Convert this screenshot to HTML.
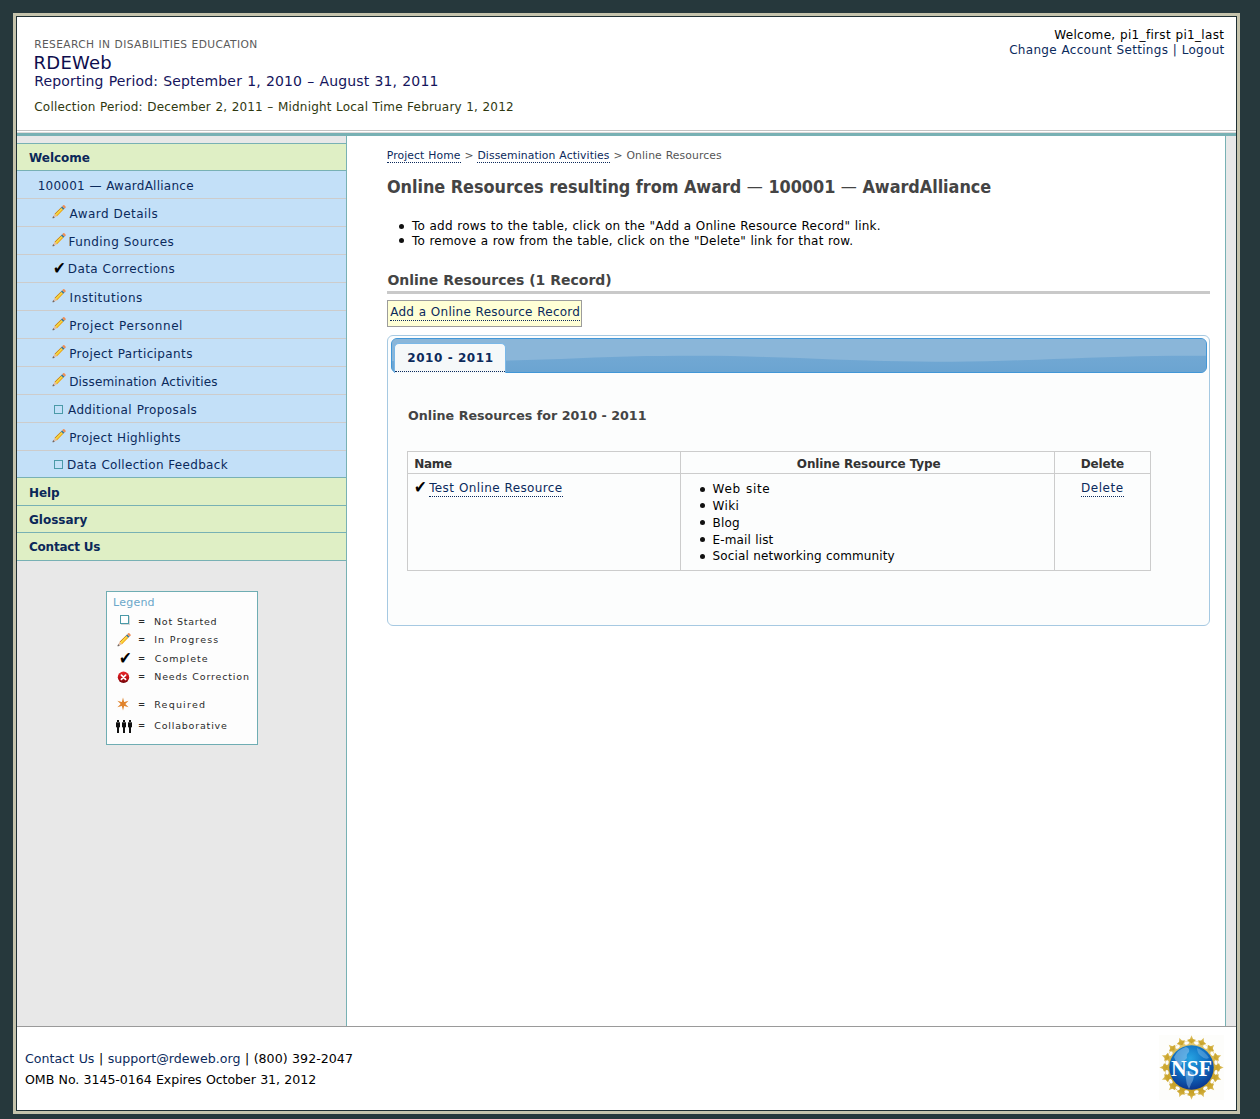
<!DOCTYPE html>
<html lang="en">
<head>
<meta charset="utf-8">
<title>RDEWeb - Online Resources</title>
<style>
html,body{margin:0;padding:0;background:#26383c;}
body{width:1260px;height:1119px;background:#26383c;font-family:"DejaVu Sans","Liberation Sans",sans-serif;font-size:12px;color:#000;position:relative;overflow:hidden;}
a{color:#0b2a5c;text-decoration:none;}
h1,h2,h3,ul,ol,li,p{margin:0;padding:0;list-style:none;font-weight:normal;}
#frame{position:absolute;left:13px;top:13px;width:1221px;height:1095px;border:3px solid #c5c3ac;background:#1f3035;}
#page{position:absolute;left:17px;top:17px;width:1219px;height:1093px;background:#fff;overflow:hidden;}
.t{position:absolute;white-space:nowrap;line-height:1;margin:0;}
.bx{position:absolute;}
.ic{position:absolute;display:block;overflow:visible;}
.lk{border-bottom:1px dotted #0b2a5c;}
a.t.lk{padding-bottom:2px;}
.sq{position:absolute;width:7px;height:7px;border:1px solid #4b9aa8;}
.sqs{background:#fff;box-shadow:1px 1px 0 #d8d8d8;}
.ckn{font-size:14px;color:#000;transform-origin:0 100%;transform:scale(1.08,1.24);}
.bul{position:absolute;width:5px;height:5px;border-radius:50%;background:#111;}
.dash{font-weight:normal;position:relative;top:-1.5px;}
#legend{position:absolute;left:89px;top:574px;width:152px;height:154px;box-sizing:border-box;border:1px solid #6fadb3;background:#fdfdfd;}
#h2line{position:absolute;left:370px;top:274px;width:823px;height:3px;background:#c9c9c9;}
#addbtn{position:absolute;left:370px;top:283px;width:195px;height:27px;box-sizing:border-box;border:1px solid #9c9c9c;background:#ffffd5;}
#tabs{position:absolute;left:370px;top:318px;width:823px;height:291px;box-sizing:border-box;border:1px solid #a6c9e2;border-radius:6px;background:#fcfdfd;}
#thead{position:absolute;left:374px;top:321px;width:816px;height:35px;box-sizing:border-box;border:1px solid #4297d7;border-radius:6px;background:#6fa6d2;overflow:hidden;}
#thead svg{position:absolute;left:0;top:0;}
#tabbg{position:absolute;left:377px;top:326px;width:112px;height:30px;box-sizing:border-box;border:1px solid #79b7e7;border-bottom:0;border-radius:5px 5px 0 0;background:#f5f8f9;}
#tabdot{position:absolute;left:378px;top:354px;width:110px;height:1px;height:0;border-top:1px dotted #0b2a5c;}
#tbl{position:absolute;left:390px;top:434px;width:744px;height:120px;box-sizing:border-box;border:1px solid #ccc;}
#nsf{position:absolute;left:1142px;top:1018px;}
#hd1{left:17.20px;top:23.00px;font-size:10.67px;word-spacing:0.36px;letter-spacing:0.379px;color:#5a5a5a;}
#hd2{left:16.60px;top:37.00px;font-size:18px;letter-spacing:0.240px;color:#0d0d4d;}
#hd3{left:17.20px;top:57.00px;font-size:14px;word-spacing:0.48px;letter-spacing:0.155px;color:#15155c;}
#hd4{left:17.30px;top:84.00px;font-size:12px;word-spacing:0.41px;letter-spacing:0.192px;color:#2f380f;}
#hr1{left:1037.20px;top:12.00px;font-size:12px;word-spacing:0.41px;letter-spacing:0.322px;color:#000;}
#hr2{left:992.20px;top:27.00px;font-size:12px;word-spacing:0.41px;letter-spacing:0.305px;color:#0b2a5c;}
#nv0{left:12.00px;top:135.00px;font-size:12px;font-weight:700;letter-spacing:-0.032px;color:#0b2859;}
#nv1{left:20.63px;top:163.00px;font-size:12px;word-spacing:0.41px;letter-spacing:0.251px;color:#0b2a5c;}
#nv2{left:52.60px;top:191.00px;font-size:12px;word-spacing:0.41px;letter-spacing:0.424px;color:#0b2a5c;}
#nv3{left:51.60px;top:219.00px;font-size:12px;word-spacing:0.41px;letter-spacing:0.423px;color:#0b2a5c;}
#nv4{left:50.80px;top:246.00px;font-size:12px;word-spacing:0.41px;letter-spacing:0.388px;color:#0b2a5c;}
#nv5{left:52.60px;top:275.00px;font-size:12px;letter-spacing:0.516px;color:#0b2a5c;}
#nv6{left:52.20px;top:303.00px;font-size:12px;word-spacing:0.41px;letter-spacing:0.582px;color:#0b2a5c;}
#nv7{left:52.20px;top:331.00px;font-size:12px;word-spacing:0.41px;letter-spacing:0.395px;color:#0b2a5c;}
#nv8{left:52.20px;top:359.00px;font-size:12px;word-spacing:0.41px;letter-spacing:0.169px;color:#0b2a5c;}
#nv9{left:51.00px;top:387.00px;font-size:12px;word-spacing:0.41px;letter-spacing:0.379px;color:#0b2a5c;}
#nv10{left:52.20px;top:415.00px;font-size:12px;word-spacing:0.41px;letter-spacing:0.324px;color:#0b2a5c;}
#nv11{left:50.00px;top:442.00px;font-size:12px;word-spacing:0.41px;letter-spacing:0.304px;color:#0b2a5c;}
#ng1{left:11.98px;top:470.00px;font-size:12px;font-weight:700;letter-spacing:-0.067px;color:#0b2859;}
#ng2{left:12.00px;top:497.00px;font-size:12px;font-weight:700;color:#0b2859;}
#ng3{left:12.00px;top:524.00px;font-size:12px;font-weight:700;letter-spacing:-0.213px;color:#0b2859;}
#lg0{left:96.00px;top:580.00px;font-size:11px;letter-spacing:0.240px;color:#6ba7c9;}
#le0{left:121.20px;top:600.00px;font-size:10px;color:#2a2a2a;transform-origin:0 0;transform:scaleX(0.86);}
#ll0{left:137.00px;top:600.00px;font-size:9.5px;word-spacing:0.32px;letter-spacing:0.750px;color:#2a2a2a;}
#le1{left:121.20px;top:618.00px;font-size:10px;color:#2a2a2a;transform-origin:0 0;transform:scaleX(0.86);}
#ll1{left:137.16px;top:618.00px;font-size:9.5px;word-spacing:0.32px;letter-spacing:1.130px;color:#2a2a2a;}
#le2{left:121.20px;top:637.00px;font-size:10px;color:#2a2a2a;transform-origin:0 0;transform:scaleX(0.86);}
#ll2{left:137.80px;top:637.00px;font-size:9.5px;letter-spacing:1.000px;color:#2a2a2a;}
#le3{left:121.20px;top:655.00px;font-size:10px;color:#2a2a2a;transform-origin:0 0;transform:scaleX(0.86);}
#ll3{left:137.20px;top:655.00px;font-size:9.5px;word-spacing:0.32px;letter-spacing:0.835px;color:#2a2a2a;}
#le4{left:121.20px;top:683.00px;font-size:10px;color:#2a2a2a;transform-origin:0 0;transform:scaleX(0.86);}
#ll4{left:137.20px;top:683.00px;font-size:9.5px;letter-spacing:1.215px;color:#2a2a2a;}
#le5{left:121.20px;top:704.00px;font-size:10px;color:#2a2a2a;transform-origin:0 0;transform:scaleX(0.86);}
#ll5{left:137.20px;top:704.00px;font-size:9.5px;letter-spacing:0.810px;color:#2a2a2a;}
#bc{left:369.80px;top:134.00px;font-size:10.8px;word-spacing:0.37px;letter-spacing:0.090px;color:#555;}
#h1{left:369.80px;top:162.00px;font-size:17px;font-weight:700;letter-spacing:-0.040px;color:#444;transform-origin:0 0;transform:scaleX(0.945);}
#li1{left:395.00px;top:203.00px;font-size:12px;word-spacing:0.41px;letter-spacing:0.228px;color:#000;}
#li2{left:395.00px;top:218.00px;font-size:12px;word-spacing:0.41px;letter-spacing:0.200px;color:#000;}
#h2{left:370.40px;top:256.00px;font-size:14px;font-weight:700;letter-spacing:-0.005px;color:#444;}
#add{left:373.20px;top:289.00px;font-size:12px;word-spacing:0.41px;letter-spacing:0.263px;color:#0b2a5c;}
#tab{left:390.23px;top:335.00px;font-size:12px;font-weight:700;letter-spacing:0.570px;color:#0b2a5c;}
#ph{left:390.60px;top:392.00px;font-size:13px;font-weight:700;letter-spacing:0.016px;color:#444;transform-origin:0 0;transform:scaleX(0.975);}
#th1{left:397.16px;top:441.00px;font-size:12px;font-weight:700;letter-spacing:-0.266px;color:#333;}
#th2{left:779.80px;top:441.00px;font-size:12px;font-weight:700;letter-spacing:-0.100px;color:#333;}
#th3{left:1063.80px;top:441.00px;font-size:12px;font-weight:700;letter-spacing:-0.180px;color:#333;}
#td1{left:412.20px;top:465.00px;font-size:12px;word-spacing:0.41px;letter-spacing:0.380px;color:#0b2a5c;}
#ul0{left:695.60px;top:466.00px;font-size:12px;word-spacing:0.41px;letter-spacing:0.729px;color:#000;}
#ul1{left:695.60px;top:483.00px;font-size:12px;letter-spacing:0.333px;color:#000;}
#ul2{left:695.60px;top:500.00px;font-size:12px;letter-spacing:0.201px;color:#000;}
#ul3{left:695.60px;top:517.00px;font-size:12px;word-spacing:0.41px;letter-spacing:0.120px;color:#000;}
#ul4{left:695.60px;top:533.00px;font-size:12px;word-spacing:0.41px;letter-spacing:0.115px;color:#000;}
#td3{left:1064.00px;top:465.00px;font-size:12px;letter-spacing:0.520px;color:#0b2a5c;}
#ft1{left:8.00px;top:1036.00px;font-size:12.6px;word-spacing:0.43px;letter-spacing:0.025px;color:#000;}
#ft2{left:8.00px;top:1057.00px;font-size:12.6px;word-spacing:0.43px;letter-spacing:-0.073px;color:#000;}
</style>
</head>
<body>
<svg width="0" height="0" style="position:absolute"><defs>
<g id="pencil"><g transform="translate(1.8,15) rotate(-45)"><polygon points="-0.4,0 0.4,-0.75 2,-1 2,1 0.4,0.75" fill="#74665f"/><polygon points="2,-1 4.3,-1.7 4.3,1.7 2,1" fill="#e8bb9d"/><rect x="4.3" y="-1.7" width="8.9" height="1.2" fill="#d6860a"/><rect x="4.3" y="-0.5" width="8.9" height="1.1" fill="#ffe327"/><rect x="4.3" y="0.6" width="8.9" height="1.1" fill="#f2a30a"/><rect x="13.2" y="-1.7" width="1.8" height="3.4" fill="#3f7891"/><path d="M15,-1.7 h1.3 a0.9,0.9 0 0 1 0.9,0.9 v1.6 a0.9,0.9 0 0 1 -0.9,0.9 h-1.3 z" fill="#f08d55"/></g></g>
</defs></svg>
<div id="frame"></div>
<div id="page">
  <div id="header">
    <div class="t" id="hd1">RESEARCH IN DISABILITIES EDUCATION</div>
    <div class="t" id="hd2">RDEWeb</div>
    <div class="t" id="hd3">Reporting Period: September 1, 2010 – August 31, 2011</div>
    <div class="t" id="hd4">Collection Period: December 2, 2011 – Midnight Local Time February 1, 2012</div>
    <div class="t" id="hr1">Welcome, pi1_first pi1_last</div>
    <div class="t" id="hr2"><a>Change Account Settings</a> | <a>Logout</a></div>
    <div class="bx" style="left:0px;top:113px;width:1219px;height:1px;background:#c3c3c3"></div>
    <div class="bx" style="left:0px;top:115px;width:1219px;height:1px;background:#dfdbdb"></div>
    <div class="bx" style="left:0px;top:116px;width:1219px;height:3px;background:#78b1b4"></div>
  </div>
  <div id="sidebar">
    <div class="bx" style="left:0px;top:119px;width:329px;height:890px;background:#e8e8e8"></div>
    <div class="bx" style="left:329px;top:119px;width:1px;height:890px;background:#78b1b4"></div>
    <div class="bx" style="left:0px;top:126px;width:329px;height:1px;background:#78b1b4"></div>
    <div class="bx" style="left:0px;top:127px;width:329px;height:26px;background:#dfefc5"></div>
    <div class="bx" style="left:0px;top:153px;width:329px;height:1px;background:#78b1b4"></div>
    <div class="bx" style="left:0px;top:154px;width:329px;height:306px;background:#c3e0f8"></div>
    <div class="bx" style="left:0px;top:181px;width:329px;height:1px;background:#cdcccb"></div>
    <div class="bx" style="left:0px;top:209px;width:329px;height:1px;background:#cdcccb"></div>
    <div class="bx" style="left:0px;top:237px;width:329px;height:1px;background:#cdcccb"></div>
    <div class="bx" style="left:0px;top:265px;width:329px;height:1px;background:#cdcccb"></div>
    <div class="bx" style="left:0px;top:293px;width:329px;height:1px;background:#cdcccb"></div>
    <div class="bx" style="left:0px;top:321px;width:329px;height:1px;background:#cdcccb"></div>
    <div class="bx" style="left:0px;top:349px;width:329px;height:1px;background:#cdcccb"></div>
    <div class="bx" style="left:0px;top:377px;width:329px;height:1px;background:#cdcccb"></div>
    <div class="bx" style="left:0px;top:405px;width:329px;height:1px;background:#cdcccb"></div>
    <div class="bx" style="left:0px;top:433px;width:329px;height:1px;background:#cdcccb"></div>
    <div class="bx" style="left:0px;top:460px;width:329px;height:1px;background:#78b1b4"></div>
    <div class="bx" style="left:0px;top:461px;width:329px;height:27px;background:#dfefc5"></div>
    <div class="bx" style="left:0px;top:488px;width:329px;height:1px;background:#78b1b4"></div>
    <div class="bx" style="left:0px;top:489px;width:329px;height:26px;background:#dfefc5"></div>
    <div class="bx" style="left:0px;top:515px;width:329px;height:1px;background:#78b1b4"></div>
    <div class="bx" style="left:0px;top:516px;width:329px;height:27px;background:#dfefc5"></div>
    <div class="bx" style="left:0px;top:543px;width:329px;height:1px;background:#78b1b4"></div>
    <b class="t" id="nv0">Welcome</b>
    <a class="t" id="nv1">100001 — AwardAlliance</a>
    <ul id="nav">
      <li><svg class="ic" style="left:34.0px;top:186.0px" width="16" height="16" viewBox="0 0 16 16"><use href="#pencil"/></svg><a class="t" id="nv2">Award Details</a></li>
      <li><svg class="ic" style="left:34.0px;top:214.0px" width="16" height="16" viewBox="0 0 16 16"><use href="#pencil"/></svg><a class="t" id="nv3">Funding Sources</a></li>
      <li><span class="t ckn" style="left:36.2px;top:245px">✔</span><a class="t" id="nv4">Data Corrections</a></li>
      <li><svg class="ic" style="left:34.0px;top:270.0px" width="16" height="16" viewBox="0 0 16 16"><use href="#pencil"/></svg><a class="t" id="nv5">Institutions</a></li>
      <li><svg class="ic" style="left:34.0px;top:298.0px" width="16" height="16" viewBox="0 0 16 16"><use href="#pencil"/></svg><a class="t" id="nv6">Project Personnel</a></li>
      <li><svg class="ic" style="left:34.0px;top:326.0px" width="16" height="16" viewBox="0 0 16 16"><use href="#pencil"/></svg><a class="t" id="nv7">Project Participants</a></li>
      <li><svg class="ic" style="left:34.0px;top:354.0px" width="16" height="16" viewBox="0 0 16 16"><use href="#pencil"/></svg><a class="t" id="nv8">Dissemination Activities</a></li>
      <li><span class="sq" style="left:37px;top:388px"></span><a class="t" id="nv9">Additional Proposals</a></li>
      <li><svg class="ic" style="left:34.0px;top:410.0px" width="16" height="16" viewBox="0 0 16 16"><use href="#pencil"/></svg><a class="t" id="nv10">Project Highlights</a></li>
      <li><span class="sq" style="left:37px;top:443px"></span><a class="t" id="nv11">Data Collection Feedback</a></li>
    </ul>
    <b class="t" id="ng1">Help</b>
    <b class="t" id="ng2">Glossary</b>
    <b class="t" id="ng3">Contact Us</b>
    <div id="legend"></div>
    <div class="t" id="lg0">Legend</div>
    <ul id="legend-list">
      <li><span class="sq sqs" style="left:103px;top:598px"></span><span class="t" id="le0">=</span><span class="t" id="ll0">Not Started</span></li>
      <li><svg class="ic" style="left:99.2px;top:613.5px" width="16" height="16" viewBox="0 0 16 16"><use href="#pencil"/></svg><span class="t" id="le1">=</span><span class="t" id="ll1">In Progress</span></li>
      <li><span class="t ckn" style="left:102.4px;top:635px">✔</span><span class="t" id="le2">=</span><span class="t" id="ll2">Complete</span></li>
      <li><svg class="ic" style="left:100px;top:654px" width="13" height="13" viewBox="0 0 13 13"><defs><linearGradient id="rg" x1="0" y1="0" x2="0" y2="1"><stop offset="0" stop-color="#e8282c"/><stop offset=".55" stop-color="#c01016"/><stop offset="1" stop-color="#6e0508"/></linearGradient></defs><circle cx="6.5" cy="6.3" r="5.7" fill="url(#rg)"/><path d="M4.4,4.2 L8.6,8.4 M8.6,4.2 L4.4,8.4" stroke="#fff" stroke-width="1.7" stroke-linecap="round"/></svg><span class="t" id="le3">=</span><span class="t" id="ll3">Needs Correction</span></li>
      <li><svg class="ic" style="left:99px;top:680px" width="14" height="14" viewBox="-7 -7 14 14"><g fill="#e0822a"><polygon points="0,-6.4 1.3,-1.3 -1.3,-1.3"/><polygon points="0,6.4 1.3,1.3 -1.3,1.3"/><polygon points="5.6,-3.2 1.8,0.4 0.5,-1.8"/><polygon points="-5.6,-3.2 -1.8,0.4 -0.5,-1.8"/><polygon points="5.6,3.2 1.8,-0.4 0.5,1.8"/><polygon points="-5.6,3.2 -1.8,-0.4 -0.5,1.8"/><circle r="2.1"/></g></svg><span class="t" id="le4">=</span><span class="t" id="ll4">Required</span></li>
      <li><svg class="ic" style="left:98px;top:703px" width="18" height="13" viewBox="0 0 18 13"><g fill="#111"><g id="pp"><rect x="2" y="0" width="2" height="2"/><rect x="1" y="2.3" width="4" height="5"/><rect x="2" y="7" width="2" height="6"/></g><use href="#pp" x="6"/><use href="#pp" x="12"/></g></svg><span class="t" id="le5">=</span><span class="t" id="ll5">Collaborative</span></li>
    </ul>
  </div>
  <div id="content">
    <div class="t" id="bc"><a class="lk" id="bc1">Project Home</a> &gt; <a class="lk" id="bc2">Dissemination Activities</a> &gt; Online Resources</div>
    <h1 class="t" id="h1">Online Resources resulting from Award <span class="dash">—</span> 100001 <span class="dash">—</span> AwardAlliance</h1>
    <ul>
      <li><i class="bul" style="left:382.2px;top:206.5px"></i><div class="t" id="li1">To add rows to the table, click on the "Add a Online Resource Record" link.</div></li>
      <li><i class="bul" style="left:382.2px;top:221.3px"></i><div class="t" id="li2">To remove a row from the table, click on the "Delete" link for that row.</div></li>
    </ul>
    <h2 class="t" id="h2">Online Resources (1 Record)</h2>
    <div id="h2line"></div>
    <div id="addbtn"></div>
    <a class="t lk" id="add">Add a Online Resource Record</a>
    <div id="tabs"></div>
    <div id="thead"><svg width="814" height="33" viewBox="1 1 814 33" preserveAspectRatio="none"><defs><linearGradient id="gb" x1="0" y1="0" x2="0" y2="1"><stop offset="0" stop-color="#78acd6"/><stop offset="1" stop-color="#6ba4d1"/></linearGradient></defs><rect width="816" height="35" fill="url(#gb)"/><path d="M0,0 H816 V17.8 L816,17.8 799,17.7 782,17.8 765,18.0 748,18.3 731,18.7 714,19.3 697,19.8 680,20.5 663,21.1 646,21.7 629,22.3 612,22.8 595,23.2 578,23.5 561,23.7 544,23.7 527,23.6 510,23.3 493,23.0 476,22.5 459,22.0 442,21.4 425,20.7 408,20.1 391,19.5 374,18.9 357,18.5 340,18.1 323,17.8 306,17.7 289,17.7 272,17.9 255,18.1 238,18.5 221,19.0 204,19.6 187,20.2 170,20.9 153,21.5 136,22.1 119,22.6 102,23.1 85,23.4 68,23.6 51,23.7 34,23.6 17,23.5 0,23.1 Z" fill="#8ab6d9"/></svg></div>
    <div id="tabbg"></div>
    <a class="t" id="tab">2010 - 2011</a>
    <div id="tabdot"></div>
    <h3 class="t" id="ph">Online Resources for 2010 - 2011</h3>
    <div id="tbl"></div>
    <div class="bx" style="left:391px;top:456px;width:742px;height:1px;background:#ccc"></div>
    <div class="bx" style="left:663px;top:435px;width:1px;height:118px;background:#ccc"></div>
    <div class="bx" style="left:1037px;top:435px;width:1px;height:118px;background:#ccc"></div>
    <div class="t" id="th1">Name</div>
    <div class="t" id="th2">Online Resource Type</div>
    <div class="t" id="th3">Delete</div>
    <span class="t ckn" style="left:397.0px;top:464px">✔</span>
    <a class="t lk" id="td1">Test Online Resource</a>
    <ul>
        <li><i class="bul" style="left:682.5px;top:469.5px"></i><div class="t" id="ul0">Web site</div></li>
        <li><i class="bul" style="left:682.5px;top:486.2px"></i><div class="t" id="ul1">Wiki</div></li>
        <li><i class="bul" style="left:682.5px;top:502.9px"></i><div class="t" id="ul2">Blog</div></li>
        <li><i class="bul" style="left:682.5px;top:520.0px"></i><div class="t" id="ul3">E-mail list</div></li>
        <li><i class="bul" style="left:682.5px;top:536.7px"></i><div class="t" id="ul4">Social networking community</div></li>
    </ul>
    <a class="t lk" id="td3">Delete</a>
  </div>
  <div class="bx" style="left:1208px;top:119px;width:1px;height:890px;background:#78b1b4"></div>
  <div class="bx" style="left:1209px;top:119px;width:10px;height:890px;background:#e8e8e8"></div>
  <div id="footer">
    <div class="bx" style="left:0px;top:1009px;width:1219px;height:1px;background:#9a9a9a"></div>
    <div class="t" id="ft1"><a>Contact Us</a> | <a>support@rdeweb.org</a> | (800) 392-2047</div>
    <div class="t" id="ft2">OMB No. 3145-0164 Expires October 31, 2012</div>
    <svg id="nsf" width="65" height="65" viewBox="0 0 65 65"><defs><radialGradient id="gl" cx=".47" cy=".3" r=".78"><stop offset="0" stop-color="#27a4e2"/><stop offset=".5" stop-color="#0f6cc0"/><stop offset="1" stop-color="#0a2780"/></radialGradient><linearGradient id="gd" x1="0" y1="0" x2="0" y2="1"><stop offset="0" stop-color="#e3cb78"/><stop offset=".5" stop-color="#d0ab36"/><stop offset="1" stop-color="#c59f24"/></linearGradient></defs><rect width="65" height="65" fill="#fdfdfb"/><g fill="url(#gd)"><circle cx="32.5" cy="32.5" r="26.8"/><g transform="translate(32.50,5.50) rotate(0.0)"><polygon points="0,-5.2 1.5,-1.6 4.6,-0.4 1.9,1.2 0,3 -1.9,1.2 -4.6,-0.4 -1.5,-1.6"/></g><g transform="translate(42.83,7.56) rotate(22.5)"><polygon points="0,-5.2 1.5,-1.6 4.6,-0.4 1.9,1.2 0,3 -1.9,1.2 -4.6,-0.4 -1.5,-1.6"/></g><g transform="translate(51.59,13.41) rotate(45.0)"><polygon points="0,-5.2 1.5,-1.6 4.6,-0.4 1.9,1.2 0,3 -1.9,1.2 -4.6,-0.4 -1.5,-1.6"/></g><g transform="translate(57.44,22.17) rotate(67.5)"><polygon points="0,-5.2 1.5,-1.6 4.6,-0.4 1.9,1.2 0,3 -1.9,1.2 -4.6,-0.4 -1.5,-1.6"/></g><g transform="translate(59.50,32.50) rotate(90.0)"><polygon points="0,-5.2 1.5,-1.6 4.6,-0.4 1.9,1.2 0,3 -1.9,1.2 -4.6,-0.4 -1.5,-1.6"/></g><g transform="translate(57.44,42.83) rotate(112.5)"><polygon points="0,-5.2 1.5,-1.6 4.6,-0.4 1.9,1.2 0,3 -1.9,1.2 -4.6,-0.4 -1.5,-1.6"/></g><g transform="translate(51.59,51.59) rotate(135.0)"><polygon points="0,-5.2 1.5,-1.6 4.6,-0.4 1.9,1.2 0,3 -1.9,1.2 -4.6,-0.4 -1.5,-1.6"/></g><g transform="translate(42.83,57.44) rotate(157.5)"><polygon points="0,-5.2 1.5,-1.6 4.6,-0.4 1.9,1.2 0,3 -1.9,1.2 -4.6,-0.4 -1.5,-1.6"/></g><g transform="translate(32.50,59.50) rotate(180.0)"><polygon points="0,-5.2 1.5,-1.6 4.6,-0.4 1.9,1.2 0,3 -1.9,1.2 -4.6,-0.4 -1.5,-1.6"/></g><g transform="translate(22.17,57.44) rotate(202.5)"><polygon points="0,-5.2 1.5,-1.6 4.6,-0.4 1.9,1.2 0,3 -1.9,1.2 -4.6,-0.4 -1.5,-1.6"/></g><g transform="translate(13.41,51.59) rotate(225.0)"><polygon points="0,-5.2 1.5,-1.6 4.6,-0.4 1.9,1.2 0,3 -1.9,1.2 -4.6,-0.4 -1.5,-1.6"/></g><g transform="translate(7.56,42.83) rotate(247.5)"><polygon points="0,-5.2 1.5,-1.6 4.6,-0.4 1.9,1.2 0,3 -1.9,1.2 -4.6,-0.4 -1.5,-1.6"/></g><g transform="translate(5.50,32.50) rotate(270.0)"><polygon points="0,-5.2 1.5,-1.6 4.6,-0.4 1.9,1.2 0,3 -1.9,1.2 -4.6,-0.4 -1.5,-1.6"/></g><g transform="translate(7.56,22.17) rotate(292.5)"><polygon points="0,-5.2 1.5,-1.6 4.6,-0.4 1.9,1.2 0,3 -1.9,1.2 -4.6,-0.4 -1.5,-1.6"/></g><g transform="translate(13.41,13.41) rotate(315.0)"><polygon points="0,-5.2 1.5,-1.6 4.6,-0.4 1.9,1.2 0,3 -1.9,1.2 -4.6,-0.4 -1.5,-1.6"/></g><g transform="translate(22.17,7.56) rotate(337.5)"><polygon points="0,-5.2 1.5,-1.6 4.6,-0.4 1.9,1.2 0,3 -1.9,1.2 -4.6,-0.4 -1.5,-1.6"/></g></g><g fill="#fdfdfb"><ellipse cx="37.36" cy="8.08" rx="2.4" ry="1.6" transform="rotate(11.25 37.36 8.08)"/><ellipse cx="46.33" cy="11.80" rx="2.4" ry="1.6" transform="rotate(33.75 46.33 11.80)"/><ellipse cx="53.20" cy="18.67" rx="2.4" ry="1.6" transform="rotate(56.25 53.20 18.67)"/><ellipse cx="56.92" cy="27.64" rx="2.4" ry="1.6" transform="rotate(78.75 56.92 27.64)"/><ellipse cx="56.92" cy="37.36" rx="2.4" ry="1.6" transform="rotate(101.25 56.92 37.36)"/><ellipse cx="53.20" cy="46.33" rx="2.4" ry="1.6" transform="rotate(123.75 53.20 46.33)"/><ellipse cx="46.33" cy="53.20" rx="2.4" ry="1.6" transform="rotate(146.25 46.33 53.20)"/><ellipse cx="37.36" cy="56.92" rx="2.4" ry="1.6" transform="rotate(168.75 37.36 56.92)"/><ellipse cx="27.64" cy="56.92" rx="2.4" ry="1.6" transform="rotate(191.25 27.64 56.92)"/><ellipse cx="18.67" cy="53.20" rx="2.4" ry="1.6" transform="rotate(213.75 18.67 53.20)"/><ellipse cx="11.80" cy="46.33" rx="2.4" ry="1.6" transform="rotate(236.25 11.80 46.33)"/><ellipse cx="8.08" cy="37.36" rx="2.4" ry="1.6" transform="rotate(258.75 8.08 37.36)"/><ellipse cx="8.08" cy="27.64" rx="2.4" ry="1.6" transform="rotate(281.25 8.08 27.64)"/><ellipse cx="11.80" cy="18.67" rx="2.4" ry="1.6" transform="rotate(303.75 11.80 18.67)"/><ellipse cx="18.67" cy="11.80" rx="2.4" ry="1.6" transform="rotate(326.25 18.67 11.80)"/><ellipse cx="27.64" cy="8.08" rx="2.4" ry="1.6" transform="rotate(348.75 27.64 8.08)"/></g><circle cx="32.5" cy="32.5" r="22.2" fill="url(#gl)"/><path d="M15,22 q4,-8 12,-10 q4,1 3,5 q-3,2 -2,6 q-4,3 -6,8 q-5,-3 -7,-9 z" fill="#9ccaf0" opacity=".5"/><path d="M27,36 q5,-1 8,3 q0,6 -3,10 q-1,3 -2,5 q-3,-5 -3,-10 q-1,-4 0,-8 z" fill="#9ccaf0" opacity=".45"/><path d="M38,13 q8,3 12,10 q-4,2 -8,-2 q-4,-3 -4,-8 z" fill="#9ccaf0" opacity=".35"/><text x="32.5" y="40.8" text-anchor="middle" font-family="'Liberation Serif','DejaVu Serif',serif" font-weight="bold" font-size="24" textLength="41" lengthAdjust="spacingAndGlyphs" fill="#fff">NSF</text></svg>
  </div>
</div>
</body>
</html>
